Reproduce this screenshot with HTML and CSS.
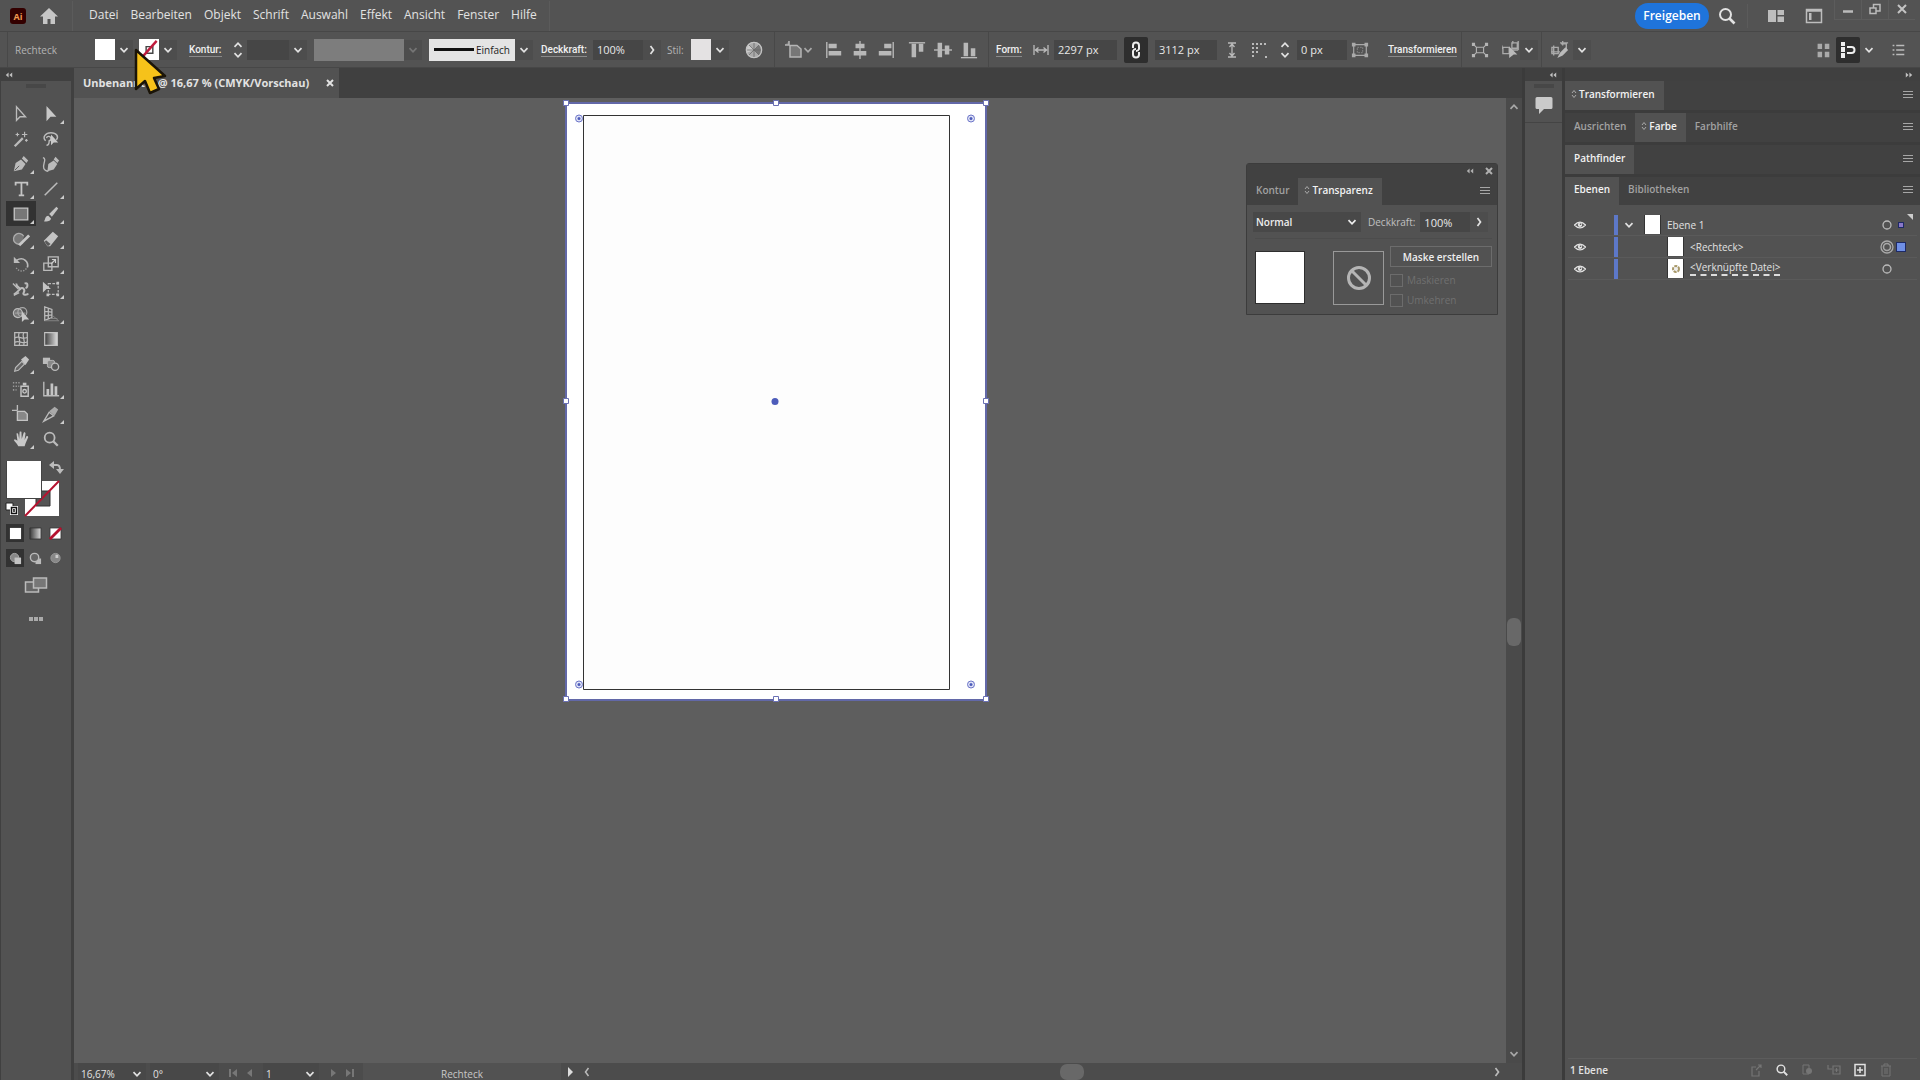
FILE: index.html
```html
<!DOCTYPE html>
<html lang="de">
<head>
<meta charset="utf-8">
<title>Unbenannt-1 – Illustrator</title>
<link rel="stylesheet" href="styles.css">
</head>
<body>
<svg class="sprite" aria-hidden="true">
  <symbol id="down" viewBox="0 0 10 10"><path d="M1.5 3.2 5 6.8l3.500-3.600" fill="none" stroke="currentColor" stroke-width="1.700"/></symbol>
  <symbol id="up" viewBox="0 0 10 10"><path d="M1.500 6.800 5 3.200l3.500 3.600" fill="none" stroke="currentColor" stroke-width="1.700"/></symbol>
  <symbol id="right" viewBox="0 0 10 10"><path d="M3.500 1 6.500 5l-3 4" fill="none" stroke="currentColor" stroke-width="1.700"/></symbol>
  <symbol id="left" viewBox="0 0 10 10"><path d="M6.500 1 3.500 5l3 4" fill="none" stroke="currentColor" stroke-width="1.500"/></symbol>
  <symbol id="collapse" viewBox="0 0 10 10"><path d="M4.500 2v6L1 5zM9 2v6L5.500 5z" fill="currentColor"/></symbol>
  <symbol id="expand" viewBox="0 0 10 10"><path d="M1 2v6l3.500-3zM5.500 2v6L9 5z" fill="currentColor"/></symbol>
  <symbol id="burger" viewBox="0 0 10 10"><path d="M0 1.500h10M0 4.500h10M0 7.500h10" stroke="currentColor" stroke-width="1.200"/></symbol>
  <symbol id="updown" viewBox="0 0 6 10"><path d="M1 4 3 1.500 5 4M1 6l2 2.500L5 6" fill="none" stroke="currentColor"/></symbol>
  <symbol id="cross" viewBox="0 0 10 10"><path d="M2 2l6 6M8 2 2 8" stroke="currentColor" stroke-width="2"/></symbol>
  <symbol id="lens" viewBox="0 0 20 20"><circle cx="8.500" cy="8.500" r="5.500" fill="none" stroke="currentColor" stroke-width="2"/><path d="m12.500 12.500 5 5" stroke="currentColor" stroke-width="2.600"/></symbol>
  <symbol id="eye" viewBox="0 0 12 10"><path d="M.5 5Q6-.8 11.500 5 6 10.800.5 5z" fill="none" stroke="currentColor" stroke-width="1.300"/><circle cx="6" cy="4.800" r="2.200" fill="currentColor"/><circle cx="6.500" cy="4.300" r=".8" fill="#525252"/></symbol>
  <symbol id="nodes" viewBox="0 0 20 20"><g fill="none" stroke="currentColor" stroke-width="1.200"><path d="M6 7h8v6H6zM2 3l4 4M18 3l-4 4M2 17l4-4M18 17l-4-4"/></g><path d="M1 2h3.500v3.500H1zM15.500 2H19v3.500h-3.500zM1 14.500h3.500V18H1zM15.500 14.500H19V18h-3.500z" fill="currentColor"/></symbol>
</svg>

<div class="app">
  <header class="menubar">
    <svg class="logo" viewBox="0 0 16 16" role="img" aria-label="Ai"><rect width="16" height="16" rx="3" fill="#300"/><text x="8" y="12" text-anchor="middle">Ai</text></svg>
    <button class="home" aria-label="Startseite"><svg width="18" height="18" viewBox="0 0 18 18"><path d="M9 1 0 9.500h3V17h4.500v-5h3v5H15V9.500h3z" fill="#c6c6c6"/></svg></button>
    <nav class="menu">
      <a href="#">Datei</a><a href="#">Bearbeiten</a><a href="#">Objekt</a><a href="#">Schrift</a><a href="#">Auswahl</a><a href="#">Effekt</a><a href="#">Ansicht</a><a href="#">Fenster</a><a href="#">Hilfe</a>
    </nav>
    <div class="menu-end">
      <button class="share">Freigeben</button>
      <button class="big-icon" aria-label="Suchen"><svg width="20" height="20"><use href="#lens"/></svg></button>
      <button class="big-icon divided" aria-label="Arbeitsbereich"><svg width="18" height="14" viewBox="0 0 18 14"><path d="M1 1h8v12H1zM10.500 1H17v5h-6.500zM10.500 7.500H17V13h-6.500z" fill="#bdbdbd"/></svg></button>
      <button class="big-icon" aria-label="Dokumente anordnen"><svg width="18" height="16" viewBox="0 0 18 16"><path d="M1.500 1.500h15v13h-15zM1.500 3h15" fill="none" stroke="#bdbdbd" stroke-width="1.500"/><path d="M4 5h2.500v7H4z" fill="#bdbdbd"/></svg></button>
      <div class="window-buttons">
        <button aria-label="Minimieren"><svg width="12" height="12" viewBox="0 0 12 12"><path d="M1 8.500h10" stroke="#bbb" stroke-width="2.500"/></svg></button>
        <button aria-label="Wiederherstellen"><svg width="12" height="12" viewBox="0 0 12 12"><path d="M1 5h6v5.500H1zM4.500 5V1.500H11V8H7" fill="none" stroke="#bbb" stroke-width="1.500"/></svg></button>
        <button aria-label="Schließen"><svg width="12" height="12" viewBox="0 0 12 12"><path d="m2 2 8 8M10 2l-8 8" stroke="#c4c4c4" stroke-width="2"/></svg></button>
      </div>
    </div>
  </header>

  <div class="controlbar">
    <div class="section object">
      <span class="dim">Rechteck</span>
      <button class="swatch" aria-label="Fläche"></button>
      <button class="chev" aria-label="Flächenfarbe wählen"><svg><use href="#down"/></svg></button>
      <button class="swatch" aria-label="Kontur"><svg class="none" viewBox="0 0 20 22"><path d="M7 8h7v7H7z" fill="none" stroke="#444" stroke-width="1.500"/><path d="M2 20 18 2" stroke="#c01a3c" stroke-width="2.500"/></svg></button>
      <button class="chev" aria-label="Konturfarbe wählen"><svg><use href="#down"/></svg></button>
      <label class="link" for="stroke">Kontur:</label>
      <button class="stepper" aria-label="Konturstärke ändern"><svg><use href="#up"/></svg><svg><use href="#down"/></svg></button>
      <input id="stroke" type="text">
      <button class="chev" aria-label="Konturstärke wählen"><svg><use href="#down"/></svg></button>
      <button class="profile" aria-label="Variables Breitenprofil"></button>
      <button class="chev off" aria-label="Profil wählen"><svg><use href="#down"/></svg></button>
      <button class="brush"><span class="stroke-line"></span>Einfach</button>
      <button class="chev" aria-label="Pinsel wählen"><svg><use href="#down"/></svg></button>
      <label class="link" for="opacity">Deckkraft:</label>
      <input id="opacity" type="text" value="100%">
      <button class="chev" aria-label="Deckkraft einstellen"><svg><use href="#right"/></svg></button>
      <span class="dim">Stil:</span>
      <button class="swatch style" aria-label="Grafikstil"></button>
      <button class="chev" aria-label="Stil wählen"><svg><use href="#down"/></svg></button>
      <button class="tool" aria-label="Bildmaterial neu färben"><svg viewBox="0 0 20 20"><circle cx="10" cy="10" r="8.500" fill="#aaa"/><path d="M10 10 4 4a8.500 8.500 0 0 0-2 9z" fill="#ccc"/><path d="M10 10 16 4a8.500 8.500 0 0 1 0 12z" fill="#777"/><path d="M10 10V2M10 10l6-6M10 10h8M10 10l6 6M10 10v8M10 10l-6 6M10 10H2M10 10 4 4" stroke="#666" stroke-width=".8"/><circle cx="10" cy="10" r="8.500" fill="none" stroke="#c2c2c2" stroke-width="1.500"/></svg></button>
    </div>
    <div class="section align">
      <button class="doc-align" aria-label="Ausrichten an"><svg width="18" height="18" viewBox="0 0 18 18"><path d="M4 0v4H0M5 4.500h7L16 8v8H5z" fill="#777" stroke="#b5b5b5" stroke-width="1.500"/></svg><svg width="10" height="10"><use href="#down"/></svg></button>
      <button class="tool" aria-label="Links ausrichten"><svg viewBox="0 0 20 20"><path d="M2 1v18" stroke="#bbb" stroke-width="1.500"/><path d="M4 3h9v5H4zM4 11h14v5H4z" fill="#b8b8b8"/></svg></button>
      <button class="tool" aria-label="Horizontal zentrieren"><svg viewBox="0 0 20 20"><path d="M10 0v20" stroke="#bbb" stroke-width="1.500"/><path d="M5 3h10v5H5zM3 11h14v5H3z" fill="#b8b8b8"/></svg></button>
      <button class="tool" aria-label="Rechts ausrichten"><svg viewBox="0 0 20 20"><path d="M18 1v18" stroke="#bbb" stroke-width="1.500"/><path d="M8 3h8v5H8zM2 11h14v5H2z" fill="#b8b8b8"/></svg></button>
      <button class="tool last" aria-label="Oben ausrichten"><svg viewBox="0 0 20 20"><path d="M1 2h18" stroke="#bbb" stroke-width="1.500"/><path d="M4 3h5v15H4zM12 3h5v9h-5z" fill="#b8b8b8"/></svg></button>
      <button class="tool" aria-label="Vertikal zentrieren"><svg viewBox="0 0 20 20"><path d="M0 10h20" stroke="#bbb" stroke-width="1.500"/><path d="M4 2h5v16H4zM12 5h5v10h-5z" fill="#b8b8b8"/></svg></button>
      <button class="tool" aria-label="Unten ausrichten"><svg viewBox="0 0 20 20"><path d="M1 18.500h18" stroke="#bbb" stroke-width="1.500"/><path d="M4 2h5v15H4zM12 8h5v9h-5z" fill="#b8b8b8"/></svg></button>
    </div>
    <div class="section form">
      <label class="link" for="width">Form:</label>
      <svg width="16" height="12" viewBox="0 0 16 12"><path d="M1 1v10M15 1v10M2 6h12M5.500 3.500 2.500 6l3 2.500M10.500 3.500l3 2.500-3 2.500" fill="none" stroke="#bbb" stroke-width="1.300"/></svg>
      <input id="width" type="text" value="2297 px">
      <button class="pressed" aria-label="Proportionen erhalten"><svg width="12" height="18" viewBox="0 0 12 18"><path d="M3 7V4.500a3 3 0 0 1 6 0V8a3 3 0 0 1-3 2M9 11v2.500a3 3 0 0 1-6 0V10a3 3 0 0 1 3-2" fill="none" stroke="#eee" stroke-width="2"/></svg></button>
      <input id="height" type="text" value="3112 px" aria-label="Höhe">
      <svg class="mid" width="12" height="16" viewBox="0 0 12 16"><path d="M2 1h8M2 15h8M6 2v12M3.500 5 6 2l2.500 3M3.500 11 6 14l2.500-3" fill="none" stroke="#bbb" stroke-width="1.300"/></svg>
      <svg class="mid" width="18" height="18" viewBox="0 0 18 18"><path d="M2 2v14M6 2v11M9 3h6M14 16h3" fill="none" stroke="#bbb" stroke-width="2" stroke-dasharray="2 2"/></svg>
      <button class="stepper" aria-label="Eckenradius ändern"><svg><use href="#up"/></svg><svg><use href="#down"/></svg></button>
      <input id="radius" type="text" value="0 px" aria-label="Eckenradius">
      <button class="tool" aria-label="Form isolieren"><svg viewBox="0 0 20 20"><path d="M3 4h14v12H3z" fill="none" stroke="#aaa" stroke-width="1.300"/><path d="M1 2h4v4H1zM15 2h4v4h-4zM1 14h4v4H1zM15 14h4v4h-4z" fill="#aaa"/><path d="M7 7h6v6H7z" fill="none" stroke="#888" stroke-dasharray="2 1"/></svg></button>
      <button class="link">Transformieren</button>
    </div>
    <div class="section edit select-tools">
      <button class="tool" aria-label="Isolieren"><svg><use href="#nodes"/></svg></button>
      <button class="tool" aria-label="Ähnliche auswählen"><svg viewBox="0 0 20 20"><path d="M1 7h7v7H1zM11 2h6v6h-6zM0 5v4M9 10h9M12 0v3M18 0v10" fill="none" stroke="#aaa" stroke-width="1.500"/><path d="m8 6 9 9h-4l-5 4z" fill="#bbb"/></svg></button>
      <button class="chev" aria-label="Auswahloptionen"><svg><use href="#down"/></svg></button>
    </div>
    <div class="section edit">
      <button class="tool" aria-label="Bearbeiten"><svg viewBox="0 0 20 20"><path d="M1 7h7v7H1zM11 3h6v6M3 5v11M0 12h10M13 0v5M10 2h9" fill="none" stroke="#aaa" stroke-width="1.500"/><path d="m7 19 3-6 6-6 3 3-6 6z" fill="#bbb"/></svg></button>
      <button class="chev" aria-label="Bearbeitungsoptionen"><svg><use href="#down"/></svg></button>
    </div>
    <div class="bar-end">
      <button class="tool" aria-label="Raster"><svg viewBox="0 0 20 20"><path d="M4 3h5v6H4zM12 3h5v6h-5zM4 12h5v6H4zM12 12h5v6h-5z" fill="#aaa"/></svg></button>
      <button class="pressed" aria-label="Ausrichten und einrasten"><svg width="16" height="16" viewBox="0 0 16 16"><path d="M1 0h4v4H1zM1 5h4v5H1zM1 11h4v5H1z" fill="#eee"/><path d="M7 5h4.500a3 3 0 0 1 0 6H7" fill="none" stroke="#eee" stroke-width="2"/></svg></button>
      <button class="chev" aria-label="Einrastoptionen"><svg><use href="#down"/></svg></button>
      <button class="tool" aria-label="Bedienfeldmenü"><svg viewBox="0 0 20 20"><path d="M4 5h2M4 10h2M4 15h2M8 5h9M8 10h9M8 15h9" stroke="#bbb" stroke-width="1.800"/></svg></button>
    </div>
  </div>

  <div class="workspace">
    <aside class="toolbox">
      <button class="fold" aria-label="Werkzeuge einklappen"><svg width="8" height="10"><use href="#collapse"/></svg></button>
      <div class="grip"></div>
      <div class="tools">
        <button aria-label="Auswahl"><svg viewBox="0 0 20 20"><path d="M5 2v15l4-4h6z" fill="none" stroke="#bbb" stroke-width="1.500"/></svg></button>
        <button class="more" aria-label="Direktauswahl"><svg viewBox="0 0 20 20"><path d="M5 1v17l4.500-5H16z" fill="#c8c8c8"/></svg></button>
        <button aria-label="Zauberstab"><svg viewBox="0 0 20 20"><path d="m3 18 9-9" stroke="#bbb" stroke-width="2.500"/><path d="M14 2v6M11 5h6M6 3v4M4 5h4M16 10v3M14.500 11.500h3" stroke="#bbb" stroke-width="1.300"/></svg></button>
        <button aria-label="Lasso"><svg viewBox="0 0 20 20"><path d="M4 12c-4-4 0-9 6-9s9 4 6 8M5 9a2.500 2.500 0 1 1 3 3c0 3-1 5-3 5" fill="none" stroke="#bbb" stroke-width="1.600"/><path d="M10 5v12l3-3h5z" fill="#c8c8c8"/></svg></button>
        <button class="more" aria-label="Zeichenstift"><svg viewBox="0 0 20 20"><path d="m2 18 2-9 6-4 5 5-4 6z" fill="#bbb"/><path d="m11 4 2-3 5 5-2 3z" fill="#bbb"/><path d="m3 17 5-5" stroke="#525252"/></svg></button>
        <button aria-label="Kurvenzeichner"><svg viewBox="0 0 20 20"><path d="m6 18 1-8 6-4 4 4-4 6z" fill="#bbb"/><path d="m13 5 2-3 4 4-2 3z" fill="#bbb"/><path d="M1 3c5 1-1 8 1 12 1 2 3 3 5 3" fill="none" stroke="#bbb" stroke-width="1.500"/></svg></button>
        <button class="more" aria-label="Text"><svg viewBox="0 0 20 20"><path d="M4 6V3h13v3M10.500 3v14M7.500 17h6" fill="none" stroke="#c4c4c4" stroke-width="2"/></svg></button>
        <button class="more" aria-label="Liniensegment"><svg viewBox="0 0 20 20"><path d="M3 17 17 3" stroke="#bbb" stroke-width="1.700"/></svg></button>
        <button class="more active" aria-label="Rechteck"><svg viewBox="0 0 20 20"><path d="M2.500 3.500h15v13h-15z" fill="#777" stroke="#c4c4c4" stroke-width="1.500"/></svg></button>
        <button class="more" aria-label="Pinsel"><svg viewBox="0 0 20 20"><path d="m8 10 8-8 2 2-7 9z" fill="#c4c4c4"/><path d="M2 18c2-1 1-6 5-6l3 3c0 3-5 4-8 3z" fill="#c4c4c4"/></svg></button>
        <button class="more" aria-label="Shaper"><svg viewBox="0 0 20 20"><path d="M12 14a6 6 0 1 1 1-7" fill="#777" stroke="#aaa" stroke-width="1.500"/><path d="m8 17 11-11" stroke="#c8c8c8" stroke-width="3"/></svg></button>
        <button class="more" aria-label="Radiergummi"><svg viewBox="0 0 20 20"><path d="m2 12 10-10 6 5-9 11H6z" fill="#c4c4c4"/><path d="m4.500 11.500 5 4-2 2H6l-3-4.500z" fill="#5a5a5a"/></svg></button>
        <button class="more" aria-label="Drehen"><svg viewBox="0 0 20 20"><path d="M5 6c8-5 14 2 12 8" fill="none" stroke="#bbb" stroke-width="1.800"/><path d="M2 2v7h7z" fill="#bbb"/><path d="M16 15c-3 4-9 4-12-2" fill="none" stroke="#999" stroke-width="1.500" stroke-dasharray="1.500 1.500"/></svg></button>
        <button class="more" aria-label="Skalieren"><svg viewBox="0 0 20 20"><path d="M7 2h11v11H7zM2 9h9v8H2z" fill="none" stroke="#bbb" stroke-width="1.500"/><path d="m10 10 5-5M11 5h4v4" fill="none" stroke="#ccc" stroke-width="1.300"/></svg></button>
        <button class="more" aria-label="Breite"><svg viewBox="0 0 20 20"><path d="M2 16c3-1 5-4 7-6 3-3 6 1 4 4s4 3 5 1M5 4c-1 4 4 3 4 7M14 4c4-2 4 4 1 5" fill="none" stroke="#bbb" stroke-width="2.200"/><path d="m1 4 6 6M2 17l6-3" stroke="#bbb" stroke-width="1.500"/></svg></button>
        <button class="more" aria-label="Frei transformieren"><svg viewBox="0 0 20 20"><path d="M7 4h11v12H7z" fill="none" stroke="#bbb" stroke-width="1.300" stroke-dasharray="3 1.500"/><path d="M1 2v12l4-4h5zM16 2h3v3h-3zM16 15h3v3h-3zM5 15h3v3H5z" fill="#c4c4c4"/></svg></button>
        <button class="more" aria-label="Formerstellung"><svg viewBox="0 0 20 20"><circle cx="6.500" cy="9" r="5" fill="#777" stroke="#bbb" stroke-width="1.300"/><circle cx="11.500" cy="8" r="5" fill="none" stroke="#aaa" stroke-width="1.300"/><path d="M3 9h12" stroke="#aaa"/><path d="M11 7v12l3-3h5z" fill="#c8c8c8"/></svg></button>
        <button class="more" aria-label="Perspektivenraster"><svg viewBox="0 0 20 20"><path d="M3 2v15l8-3V5zM3 7l8 1M3 12l8-1M7 3v12" fill="none" stroke="#bbb" stroke-width="1.400"/><path d="M3 17.500h16M9 15h8M12 12l6 5" stroke="#888"/></svg></button>
        <button aria-label="Gitter"><svg viewBox="0 0 20 20"><path d="M3 3h14v14H3zM8 3c-3 5 3 8 0 14M13 3c-3 5 3 8 0 14M3 9c5-4 8 3 14-1M3 14c5-4 8 3 14-1" fill="none" stroke="#bbb" stroke-width="1.400"/></svg></button>
        <button aria-label="Verlauf"><svg viewBox="0 0 20 20"><defs><linearGradient id="ramp"><stop stop-color="#3c3c3c"/><stop offset="1" stop-color="#ddd"/></linearGradient></defs><path d="M3 3h14v14H3z" fill="url(#ramp)" stroke="#c4c4c4" stroke-width="1.300"/></svg></button>
        <button class="more" aria-label="Pipette"><svg viewBox="0 0 20 20"><path d="m3 18 1-4 7-7 3 3-7 7z" fill="#666" stroke="#bbb" stroke-width="1.300"/><path d="m10 5 5-4 4 4-4 6z" fill="#c4c4c4"/></svg></button>
        <button aria-label="Angleichen"><svg viewBox="0 0 20 20"><path d="M1 3h8v7H1z" fill="#bbb"/><rect x="6" y="6" width="8" height="8" rx="2" fill="#888" stroke="#bbb"/><circle cx="14.500" cy="13" r="4" fill="#555" stroke="#bbb" stroke-width="1.500"/></svg></button>
        <button class="more" aria-label="Symbol aufsprühen"><svg viewBox="0 0 20 20"><path d="M10 7h8v11h-8z" fill="none" stroke="#c4c4c4" stroke-width="1.600"/><circle cx="14" cy="12.500" r="2" fill="none" stroke="#c4c4c4" stroke-width="1.500"/><path d="M12 3h4v3h-4z" fill="#c4c4c4"/><path d="M1 3h9M1 7h7M1 11h4" stroke="#999" stroke-width="1.800" stroke-dasharray="1.500 1.500"/></svg></button>
        <button class="more" aria-label="Diagramm"><svg viewBox="0 0 20 20"><path d="M2 2v15.500h17" fill="none" stroke="#bbb" stroke-width="1.500"/><path d="M5 10h3v7H5zM9.500 4h3v13h-3zM14 7h3v10h-3z" fill="#c4c4c4"/></svg></button>
        <button aria-label="Zeichenfläche"><svg viewBox="0 0 20 20"><path d="M6 0v6M0 6h6" stroke="#bbb" stroke-width="1.500"/><path d="M6 7h8l3 3v7H6z" fill="#888" stroke="#c4c4c4" stroke-width="1.500"/></svg></button>
        <button class="more" aria-label="Slice"><svg viewBox="0 0 20 20"><path d="m2 18 6-10 5 4z" fill="none" stroke="#bbb" stroke-width="1.500"/><path d="m8 7 6-5 4 3-4 7z" fill="#aaa"/></svg></button>
        <button class="more" aria-label="Hand"><svg viewBox="0 0 20 20"><path d="M7 18c-2-4-4-5-5-7 1-1 3 0 4 1L5 4c1-1 2 0 2 1l1 5 .5-8c1-1 2 0 2 0l.3 8L13 3c1-1 2 0 2 1l-1 7 2-4c1-1 2 0 2 1l-3 7-1 3z" fill="#c8c8c8"/></svg></button>
        <button aria-label="Zoom"><svg><use href="#lens"/></svg></button>
      </div>
      <svg class="paint" width="58" height="58" viewBox="0 0 58 58" role="img" aria-label="Fläche weiß, Kontur ohne">
        <path d="M20 21h34v35H20z" fill="#fff"/><path d="M31 31h14v15H31z" fill="#555" stroke="#333"/><path d="m20 56 34-35" stroke="#b5122f" stroke-width="2"/>
        <path d="M1 1h36v38H1z" fill="#444"/><path d="M2 1h34v37H2z" fill="#fff"/>
        <path d="M48 5h4q3 0 3 5" fill="none" stroke="#bbb" stroke-width="2"/><path d="m44 5 5-4v8zM51 9h8l-4 5z" fill="#bbb"/>
        <path d="M1 43h7v7H1z" fill="#fff" stroke="#222"/><path d="M6.500 47.500h5v6h-5z" fill="none" stroke="#fff" stroke-width="3"/><path d="M6.500 47.500h5v6h-5z" fill="none" stroke="#111" stroke-width="1.500"/>
      </svg>
      <div class="modes">
        <button class="active" aria-label="Farbe"><svg viewBox="0 0 14 14"><path d="M1 1h12v12H1z" fill="#fff"/></svg></button>
        <button aria-label="Verlauf"><svg viewBox="0 0 14 14"><path d="M1 1h12v12H1z" fill="url(#ramp)" stroke="#333"/></svg></button>
        <button aria-label="Ohne"><svg viewBox="0 0 14 14"><path d="M1 1h12v12H1z" fill="#fff" stroke="#333"/><path d="M1 13 13 1" stroke="#b5122f" stroke-width="3"/></svg></button>
        <button class="active" aria-label="Normal zeichnen"><svg viewBox="0 0 14 14"><circle cx="6" cy="6" r="4.500" fill="#888" stroke="#aaa"/><path d="M6 6h7v7H6z" fill="#c4c4c4"/></svg></button>
        <button aria-label="Dahinter zeichnen"><svg viewBox="0 0 14 14"><path d="M7 7h6v6H7z" fill="#bbb"/><circle cx="6" cy="6" r="4.500" fill="#666" stroke="#bbb" stroke-width="1.500"/></svg></button>
        <button aria-label="Innen zeichnen"><svg viewBox="0 0 14 14"><circle cx="7" cy="6.500" r="5" fill="#888" stroke="#999"/><path d="M7 6.500V3h3v3.500z" fill="#ccc"/></svg></button>
      </div>
      <button class="screen" aria-label="Bildschirmmodus"><svg width="24" height="18" viewBox="0 0 24 18"><path d="M1.500 6h13v10h-13z" fill="#666" stroke="#bbb" stroke-width="1.500"/><path d="M9.500 2h13v10h-13z" fill="#777" stroke="#bbb" stroke-width="1.500"/></svg></button>
      <button class="screen" aria-label="Symbolleiste bearbeiten"><svg width="16" height="6" viewBox="0 0 16 6"><path d="M1 1h4v4H1zM6 1h4v4H6zM11 1h4v4h-4z" fill="#aaa"/></svg></button>
    </aside>

    <main class="document">
      <div class="tabstrip"><div class="doc-tab"><span>Unbenannt-1 @ 16,67 % (CMYK/Vorschau)</span><button aria-label="Dokument schließen"><svg width="10" height="10"><use href="#cross"/></svg></button></div></div>
      <div class="stage-row">
        <div class="stage">
          <svg class="artwork" width="432" height="612" viewBox="0 0 432 612" role="img" aria-label="Zeichenfläche mit ausgewähltem Rechteck">
            <path d="M6 5h420v597H6z" fill="#fff" stroke="#6268a8" stroke-width="2"/>
            <path d="M23.500 17.500h366v574h-366z" fill="#fdfdfd" stroke="#333"/>
            <g fill="#fff" stroke="#6a70b4"><path d="M3.500 2.500h5v5h-5zM213.500 2.500h5v5h-5zM423.500 2.500h5v5h-5zM3.500 300.500h5v5h-5zM423.500 300.500h5v5h-5zM3.500 598.500h5v5h-5zM213.500 598.500h5v5h-5zM423.500 598.500h5v5h-5z"/></g>
            <g fill="#dfe2f6" stroke="#6b74c8"><circle cx="19" cy="20.500" r="3.500"/><circle cx="411" cy="20.500" r="3.500"/><circle cx="19" cy="586.500" r="3.500"/><circle cx="411" cy="586.500" r="3.500"/></g>
            <g fill="#4d5cba"><circle cx="19" cy="20.500" r="1.500"/><circle cx="411" cy="20.500" r="1.500"/><circle cx="19" cy="586.500" r="1.500"/><circle cx="411" cy="586.500" r="1.500"/><circle cx="215" cy="303.500" r="3.500"/></g>
          </svg>
          <section class="floating">
            <div class="float-title"><svg width="8" height="10"><use href="#collapse"/></svg><svg width="10" height="10"><use href="#cross"/></svg></div>
            <div class="tabs"><button class="tab">Kontur</button><button class="tab on split"><svg width="6" height="10"><use href="#updown"/></svg>Transparenz</button><button class="panel-menu" aria-label="Bedienfeldmenü"><svg width="10" height="10"><use href="#burger"/></svg></button></div>
            <div class="blend">
              <span class="pick"><select aria-label="Füllmethode"><option>Normal</option></select><svg width="10" height="10"><use href="#down"/></svg></span>
              <label for="alpha">Deckkraft:</label>
              <input id="alpha" type="text" value="100%">
              <button class="chev" aria-label="Deckkraft einstellen"><svg><use href="#right"/></svg></button>
            </div>
            <div class="mask">
              <div class="thumb-large"></div>
              <div class="mask-slot"><svg width="28" height="28" viewBox="0 0 28 28"><circle cx="14" cy="14" r="10.500" fill="none" stroke="#b5b5b5" stroke-width="3"/><path d="m7 7 14 14" stroke="#b5b5b5" stroke-width="3"/></svg></div>
              <div class="mask-options">
                <button class="make-mask">Maske erstellen</button>
                <label><input type="checkbox" disabled>Maskieren</label>
                <label><input type="checkbox" disabled>Umkehren</label>
              </div>
            </div>
          </section>
        </div>
        <div class="vscroll"><svg width="10" height="10"><use href="#up"/></svg><span class="vthumb"></span><svg width="10" height="10"><use href="#down"/></svg></div>
      </div>
      <footer class="status">
        <span class="pick zoom"><select aria-label="Zoomstufe"><option>16,67%</option></select><svg width="10" height="10"><use href="#down"/></svg></span>
        <span class="pick angle"><select aria-label="Drehung"><option>0°</option></select><svg width="10" height="10"><use href="#down"/></svg></span>
        <span class="jump"><svg width="10" height="10" viewBox="0 0 10 10"><path d="M1 1h2v8H1zM9 1v8L4 5z" fill="#777"/></svg><svg width="10" height="10" viewBox="0 0 10 10"><path d="M7 1v8L2 5z" fill="#777"/></svg></span>
        <span class="pick board"><select aria-label="Zeichenfläche"><option>1</option></select><svg width="10" height="10"><use href="#down"/></svg></span>
        <span class="jump"><svg width="10" height="10" viewBox="0 0 10 10"><path d="M3 1v8l5-4z" fill="#777"/></svg><svg width="10" height="10" viewBox="0 0 10 10"><path d="M7 1h2v8H7zM1 1v8l5-4z" fill="#777"/></svg></span>
        <span class="current">Rechteck</span>
        <svg width="10" height="10" viewBox="0 0 10 10"><path d="M3 0v10l5-5z" fill="#ddd"/></svg>
        <div class="hscroll"><svg width="10" height="10"><use href="#left"/></svg><span class="hthumb"></span><svg width="10" height="10"><use href="#right"/></svg></div>
      </footer>
    </main>

    <aside class="dock">
      <button class="fold" aria-label="Bedienfelder ausklappen"><svg width="8" height="10"><use href="#collapse"/></svg></button>
      <div class="dock-item"><div class="grip"></div><button aria-label="Kommentare"><svg width="18" height="19" viewBox="0 0 18 19"><path d="M2 1h14q1.500 0 1.500 1.500v9q0 1.500-1.500 1.500H9l-5 5v-5H2Q.5 13 .5 11.500v-9Q.5 1 2 1z" fill="#cacaca"/></svg></button></div>
    </aside>

    <aside class="panels">
      <button class="fold" aria-label="Bedienfelder einklappen"><svg width="8" height="10"><use href="#expand"/></svg></button>
      <div class="tabs"><button class="tab on split"><svg width="6" height="10"><use href="#updown"/></svg>Transformieren</button><button class="panel-menu" aria-label="Bedienfeldmenü"><svg width="10" height="10"><use href="#burger"/></svg></button></div>
      <div class="tabs"><button class="tab">Ausrichten</button><button class="tab on split"><svg width="6" height="10"><use href="#updown"/></svg>Farbe</button><button class="tab">Farbhilfe</button><button class="panel-menu" aria-label="Bedienfeldmenü"><svg width="10" height="10"><use href="#burger"/></svg></button></div>
      <div class="tabs"><button class="tab on">Pathfinder</button><button class="panel-menu" aria-label="Bedienfeldmenü"><svg width="10" height="10"><use href="#burger"/></svg></button></div>
      <div class="tabs flush"><button class="tab on">Ebenen</button><button class="tab">Bibliotheken</button><button class="panel-menu" aria-label="Bedienfeldmenü"><svg width="10" height="10"><use href="#burger"/></svg></button></div>
      <div class="layers">
        <div class="layer"><svg width="12" height="10"><use href="#eye"/></svg><span class="tint"></span><svg class="open" width="10" height="10"><use href="#down"/></svg><span class="thumb"></span><span class="name">Ebene 1</span><svg class="target" viewBox="0 0 14 14"><circle cx="7" cy="7" r="4" fill="none" stroke="#bbb" stroke-width="1.300"/></svg><span class="picked small"></span><svg class="corner" width="6" height="6" viewBox="0 0 6 6"><path d="M0 0h6v6z" fill="#ccc"/></svg></div>
        <div class="layer child"><svg width="12" height="10"><use href="#eye"/></svg><span class="tint"></span><span class="thumb"></span><span class="name">&lt;Rechteck&gt;</span><svg class="target" viewBox="0 0 14 14"><circle cx="7" cy="7" r="6" fill="none" stroke="#aaa" stroke-width="1.300"/><circle cx="7" cy="7" r="3.500" fill="none" stroke="#aaa" stroke-width="1.500"/></svg><span class="picked"></span></div>
        <div class="layer child"><svg width="12" height="10"><use href="#eye"/></svg><span class="tint"></span><span class="thumb"><svg width="10" height="10" viewBox="0 0 10 10"><circle cx="5" cy="5" r="3" fill="#eee" stroke="#a89868" stroke-width="2" stroke-dasharray="3 1"/></svg></span><span class="name linked">&lt;Verknüpfte Datei&gt;</span><svg class="target" viewBox="0 0 14 14"><circle cx="7" cy="7" r="4" fill="none" stroke="#bbb" stroke-width="1.300"/></svg></div>
      </div>
      <footer class="layer-bar">
        <span>1 Ebene</span>
        <button class="off" aria-label="Exportieren"><svg viewBox="0 0 14 14"><path d="M7 4H3v9h7V8M7 7l5-5M9 2h3v3" fill="none" stroke="currentColor" stroke-width="1.200"/></svg></button>
        <button aria-label="Objekt suchen"><svg viewBox="0 0 20 20"><use href="#lens"/></svg></button>
        <button class="off" aria-label="Schnittmaske"><svg viewBox="0 0 14 14"><path d="M2 2h6v9H2z" fill="none" stroke="currentColor"/><circle cx="8" cy="8" r="3" fill="currentColor"/></svg></button>
        <button class="off" aria-label="Neue Unterebene"><svg viewBox="0 0 14 14"><path d="M1 2v4h4M6 3h7v8H6zM9.500 5v4M7.500 7h4" fill="none" stroke="currentColor" stroke-width="1.200"/></svg></button>
        <button aria-label="Neue Ebene"><svg viewBox="0 0 14 14"><path d="M2 1.500h10v11H2zM7 4v6M4 7h6" fill="none" stroke="currentColor" stroke-width="1.500"/></svg></button>
        <button class="off" aria-label="Löschen"><svg viewBox="0 0 14 14"><path d="M2 3h10M5 3V1h4v2M3 3v10h8V3M6 5v6M8 5v6" fill="none" stroke="currentColor"/></svg></button>
      </footer>
    </aside>
  </div>
  <svg class="pointer" width="34" height="50" viewBox="0 0 34 50" aria-hidden="true"><path d="M2 3v39l9-8 5 12 9-4-5-11 11-2z" fill="#f6c21a" stroke="#1a1408" stroke-width="2.500" stroke-linejoin="round"/></svg>
</div>
</body>
</html>
```
FILE: styles.css
```css
* { box-sizing: border-box; }
body {
  margin: 0;
  background: #535353;
  color: #e2e2e2;
  font: 10px/14px "Open Sans", "Noto Sans", sans-serif;
}
button, input, select { font: inherit; color: inherit; margin: 0; padding: 0; border: 0; background: none; }
button { display: flex; align-items: center; justify-content: center; }
a { color: inherit; text-decoration: none; }
svg { display: block; flex: none; }
.sprite { position: absolute; width: 0; height: 0; }
.app { position: relative; display: flex; flex-direction: column; height: 100vh; overflow: hidden; }

/* Menu bar */
.menubar { display: flex; align-items: center; height: 32px; padding-left: 10px; border-bottom: 1px solid #474747; }
.logo { width: 16px; height: 16px; }
.logo text { font: 700 9px "Open Sans", sans-serif; fill: #f09a50; }
.home { margin-left: 14px; }
.menu { display: flex; gap: 12px; align-items: center; height: 30px; margin-left: 14px; padding: 0 12px 2px 16px; border: solid #5b5b5b; border-width: 0 1px; font-size: 12px; }
.menu-end { display: flex; align-items: center; margin-left: auto; height: 32px; }
.share { width: 74px; height: 26px; border-radius: 13px; background: #1f74db; color: #fff; font-size: 12px; font-weight: 600; }
.big-icon { width: 36px; height: 24px; }
.big-icon.divided { width: 49px; border-left: 1px solid #5b5b5b; margin-left: 2px; padding-left: 8px; }
.window-buttons { display: flex; align-self: flex-start; margin: 0 5px 0 2px; }
.window-buttons button { width: 27px; height: 20px; border: solid #5c5c5c; border-width: 0 0 1px 1px; }

/* Control bar */
.controlbar { display: flex; height: 36px; border-bottom: 1px solid #474747; }
.section { display: grid; align-items: center; border-left: 1px solid #484848; }
.section > * { justify-self: start; }
.section > input { width: 100%; }
.object { margin-left: 7px; padding-left: 7px; grid-template-columns: 80px 20px 24px 20px 30px 40px 18px 42px 25px 90px 25px 86px 26px 52px 50px 24px 24px 20px 30px 26px; padding-right: 7px; }
.align { padding-left: 10px; grid-template-columns: 36px 26px 26px 26px 31px 26px 26px; padding-right: 6px; }
.form { padding-left: 7px; grid-template-columns: 37px 21px 63px 38px 62px 30px 26px 24px 50px 41px 73px; }
.edit { padding: 0 5px; grid-auto-flow: column; }
.select-tools { grid-template-columns: 31px 22px 16px; }
.section .last { justify-self: end; }
.section .mid, .section .pressed, .section .stepper { justify-self: center; }
input[type="text"] { height: 20px; padding: 0 4px; background: #464646; color: #e8e8e8; font-size: 11px; }
.dim { color: #b4b4b4; }
.link { color: #f0f0f0; font-family: Roboto, "Open Sans", sans-serif; font-weight: 500; border-bottom: 1px solid #8a8a8a; line-height: 13px; }
.swatch { width: 20px; height: 21px; background: #fff; }
.swatch.style { background: #e4e2e3; }
.swatch .none { width: 20px; height: 21px; }
.chev { width: 18px; height: 20px; background: #4d4d4d; }
.chev svg, .stepper svg { width: 10px; height: 10px; }
.off { color: #757575; }
.stepper { flex-direction: column; width: 14px; }
.profile { width: 90px; height: 22px; background: #7d7d7d; }
.brush { width: 86px; height: 22px; padding: 0 5px; justify-content: space-between; background: #e4e4e4; color: #222; }
.stroke-line { width: 40px; height: 3px; background: #111; }
.tool { width: 26px; height: 24px; color: #b4b4b4; }
.tool svg { width: 18px; height: 18px; }
.doc-align { color: #aaa; }
.pressed { width: 24px; height: 26px; background: #2e2e2e; border-radius: 2px; }
.bar-end { display: flex; align-items: center; margin-left: auto; padding-right: 9px; }
.bar-end .chev { background: none; margin-right: 7px; }

/* Work area */
.workspace { display: flex; flex: 1; min-height: 0; background: #404040; }
.fold { color: #c0c0c0; height: 13px; flex: none; }
.grip { width: 20px; height: 4px; margin: 0 auto; background: #474747; }
.toolbox { width: 74px; display: flex; flex-direction: column; align-items: flex-start; background: #525252; border: solid #404040; border-width: 0 3px 0 1px; }
.toolbox .fold { align-self: stretch; justify-content: flex-start; padding-left: 4px; background: #404040; }
.toolbox .grip { margin-top: 3px; }
.tools { display: grid; grid-template-columns: 30px 30px; grid-auto-rows: 25px; margin: 13px 0 0 5px; }
.tools button { position: relative; color: #bbb; }
.tools svg { width: 18px; height: 18px; }
.tools .more::after { content: ""; position: absolute; right: 2px; bottom: 2px; border: solid transparent; border-width: 2px; border-right-color: #ccc; border-bottom-color: #ccc; }
.tools .active, .modes .active { background: #323232; }
.paint { margin: 9px 0 0 4px; overflow: visible; }
.modes { display: grid; grid-template-columns: 18px 18px 18px; gap: 7px 2px; margin: 6px 0 0 5px; }
.modes button { height: 18px; }
.modes svg { width: 13px; height: 13px; }
.screen { align-self: center; margin-top: 9px; height: 18px; }
.screen + .screen { margin-top: 16px; }

.document { display: flex; flex-direction: column; flex: 1; min-width: 0; }
.tabstrip { height: 30px; }
.doc-tab { display: flex; align-items: center; justify-content: space-between; width: 265px; height: 30px; padding: 0 4px 0 9px; background: #525252; font-size: 11px; font-weight: 700; }
.doc-tab span { white-space: nowrap; }
.stage-row { display: flex; flex: 1; min-height: 0; }
.stage { position: relative; flex: 1; background: #5e5e5e; }
.artwork { position: absolute; left: 486px; top: 0; }
.vscroll { display: flex; flex-direction: column; align-items: center; justify-content: space-between; width: 16px; padding: 4px 0; background: #4a4a4a; color: #a8a8a8; }
.vthumb { width: 14px; height: 28px; margin-top: 102px; border-radius: 6px; background: #686868; }

/* Status bar */
.status { display: flex; align-items: center; height: 17px; gap: 4px; padding: 0 20px 0 4px; background: #4c4c4c; }
.pick { display: grid; grid-template-columns: 1fr 10px; align-items: center; padding-right: 4px; background: #484848; }
.pick select { grid-column: 1 / 3; grid-row: 1; appearance: none; height: 100%; padding-left: 3px; }
.pick svg { grid-column: 2; grid-row: 1; pointer-events: none; }
.status .pick { height: 17px; padding-top: 4px; }
.zoom { width: 68px; }
.angle { width: 69px; }
.board { width: 56px; }
.jump { display: flex; gap: 7px; justify-content: center; width: 36px; padding-top: 3px; }
.current { width: 198px; padding-top: 5px; text-align: center; color: #c8c8c8; background: #525252; }
.hscroll { display: flex; flex: 1; align-items: center; justify-content: space-between; color: #bbb; padding-left: 3px; }
.hthumb { width: 24px; height: 16px; margin-left: 60px; border-radius: 7px; background: #686868; }

/* Panel parts */
.tabs { display: flex; height: 27px; background: #414141; }
.tab { gap: 2px; padding: 0 9px 4px; color: #a2a2a2; font-size: 10px; font-weight: 600; }
.tab.on { background: #525252; color: #f2f2f2; }
.tab.split { padding-left: 6px; }
.tab svg { color: #aaa; }
.panel-menu { margin-left: auto; padding: 0 7px 2px 0; color: #a6a6a6; }

/* Transparency panel */
.floating { position: absolute; top: 65px; right: 8px; width: 252px; height: 152px; background: #525252; border: 1px solid #3c3c3c; border-radius: 3px 3px 0 0; }
.float-title { display: flex; justify-content: flex-end; align-items: center; gap: 10px; height: 14px; padding: 0 3px; background: #414141; color: #b0b0b0; }
.blend { display: flex; align-items: center; padding: 7px 9px 0 6px; }
.blend .pick { width: 110px; height: 20px; color: #eee; font-weight: 600; }
.blend label { margin: 0 5px 0 7px; color: #c0c0c0; }
.blend input { width: 50px; }
.mask { display: flex; margin: 6px 5px 0 8px; padding-top: 7px; border-top: 1px solid #4c4c4c; }
.thumb-large { width: 50px; height: 53px; margin-top: 5px; background: #fff; border: 1px solid #2e2e2e; }
.mask-slot { display: flex; align-items: center; justify-content: center; width: 51px; height: 54px; margin: 5px 6px 0 28px; border: 1px solid #999; }
.mask-options { display: flex; flex: 1; flex-direction: column; gap: 6px; color: #707070; }
.mask-options label { display: flex; align-items: center; gap: 4px; height: 14px; }
.mask-options input { appearance: none; width: 13px; height: 13px; border: 1px solid #6c6c6c; }
.make-mask { height: 21px; border: 1px solid #6c6c6c; color: #eee; font-weight: 600; }

/* Docks */
.dock { width: 43px; display: flex; flex-direction: column; border: solid #3b3b3b; border-width: 0 3px; background: #525252; }
.dock .fold { justify-content: flex-end; padding-right: 5px; background: #404040; }
.dock-item { height: 42px; padding-top: 3px; border-bottom: 1px solid #444; }
.dock-item button { margin: 8px auto 0; }
.panels { width: 355px; display: flex; flex-direction: column; background: #525252; }
.panels .fold { justify-content: flex-end; padding-right: 7px; background: #404040; }
.panels .tabs { height: 32px; border-bottom: 3px solid #3c3c3c; }
.panels .tabs.flush { height: 28px; border: 0; }
.layers { flex: 1; margin: 9px 3px 0; border-bottom: 1px solid #5c5c5c; }
.layer { display: flex; align-items: center; height: 22px; padding-left: 6px; border-bottom: 1px solid #5a5a5a; }
.tint { width: 4px; height: 20px; margin-left: 28px; background: #5d78c8; }
.open { margin-left: 6px; }
.thumb { display: grid; place-items: center; width: 17px; height: 19px; background: #fff; border: solid #333; border-width: 0 1px; }
.open + .thumb { margin-left: 10px; }
.child .thumb { margin-left: 49px; }
.name { flex: 1; margin-left: 6px; }
.linked { flex: none; margin-right: auto; border-bottom: 2px dashed #ddd; line-height: 13px; }
.target { width: 14px; height: 14px; margin-right: 23px; }
.target:has(+ .picked) { margin-right: 2px; }
.picked { width: 10px; height: 10px; margin-right: 11px; border: 1px solid #1e2a66; background: #6f8fe6; }
.picked.small { width: 6px; height: 6px; margin: 0 3px 0 2px; background: #8a78c8; }
.picked.small + .corner { align-self: flex-start; margin-right: 4px; }
.layer-bar { display: flex; align-items: center; gap: 12px; height: 21px; padding: 0 27px 0 5px; }
.layer-bar span { margin-right: auto; font-weight: 600; }
.layer-bar svg { width: 14px; height: 14px; }

.pointer { position: absolute; left: 134px; top: 47px; }
```
